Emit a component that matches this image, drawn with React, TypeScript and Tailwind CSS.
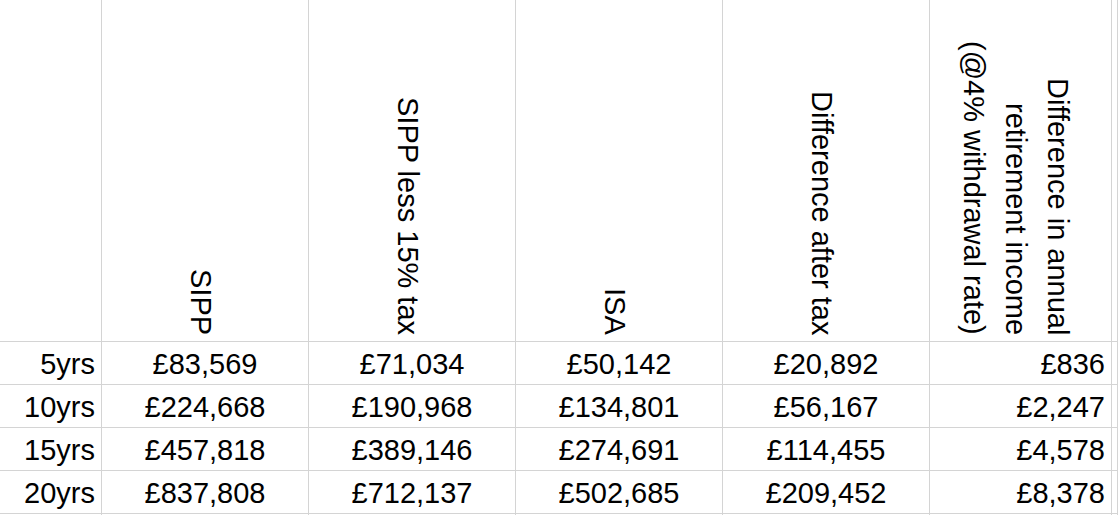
const rows = [
  { label: '5yrs', sipp: '£83,569', net: '£71,034', isa: '£50,142', diff: '£20,892', income: '£836' },
  { label: '10yrs', sipp: '£224,668', net: '£190,968', isa: '£134,801', diff: '£56,167', income: '£2,247' },
  { label: '15yrs', sipp: '£457,818', net: '£389,146', isa: '£274,691', diff: '£114,455', income: '£4,578' },
  { label: '20yrs', sipp: '£837,808', net: '£712,137', isa: '£502,685', diff: '£209,452', income: '£8,378' },
]

const headers: string[][] = [
  ['SIPP'],
  ['SIPP less 15% tax'],
  ['ISA'],
  ['Difference after tax'],
  ['Difference in annual', 'retirement income', '(@4% withdrawal rate)'],
]

const cell = 'border-r border-b border-[#d4d4d4]'

export default function App() {
  return (
    <div className="w-[1118px] h-[515px] overflow-hidden bg-white text-black font-['Liberation_Sans',Arial,sans-serif] text-[29px]">
      <div className="grid grid-cols-[102px_207px_207px_207px_207px_182px_1fr] grid-rows-[342px_43px_43px_43px_43px_43px]">
        {/* header row */}
        <div className={cell} />
        {headers.map((lines, i) => (
          <div key={i} className={`${cell} flex items-end justify-center pb-[6px] pr-[9px]`}>
            <div className="[writing-mode:vertical-rl] text-end whitespace-nowrap leading-[42px]">
              {lines.map((l, j) => (
                <div key={j}>{l}</div>
              ))}
            </div>
          </div>
        ))}
        <div className={cell} />

        {/* data rows */}
        {rows.map((r) => (
          <div key={r.label} className="contents">
            <div className={`${cell} flex items-end justify-end pr-[6px] pb-[3px] leading-[33px]`}>{r.label}</div>
            <div className={`${cell} flex items-end justify-center pb-[3px] leading-[33px]`}>{r.sipp}</div>
            <div className={`${cell} flex items-end justify-center pb-[3px] leading-[33px]`}>{r.net}</div>
            <div className={`${cell} flex items-end justify-center pb-[3px] leading-[33px]`}>{r.isa}</div>
            <div className={`${cell} flex items-end justify-center pb-[3px] leading-[33px]`}>{r.diff}</div>
            <div className={`${cell} flex items-end justify-end pr-[6px] pb-[3px] leading-[33px]`}>{r.income}</div>
            <div className={cell} />
          </div>
        ))}

        {/* partial row at the bottom edge */}
        {Array.from({ length: 7 }).map((_, i) => (
          <div key={i} className="border-r border-[#d4d4d4]" />
        ))}
      </div>
    </div>
  )
}
